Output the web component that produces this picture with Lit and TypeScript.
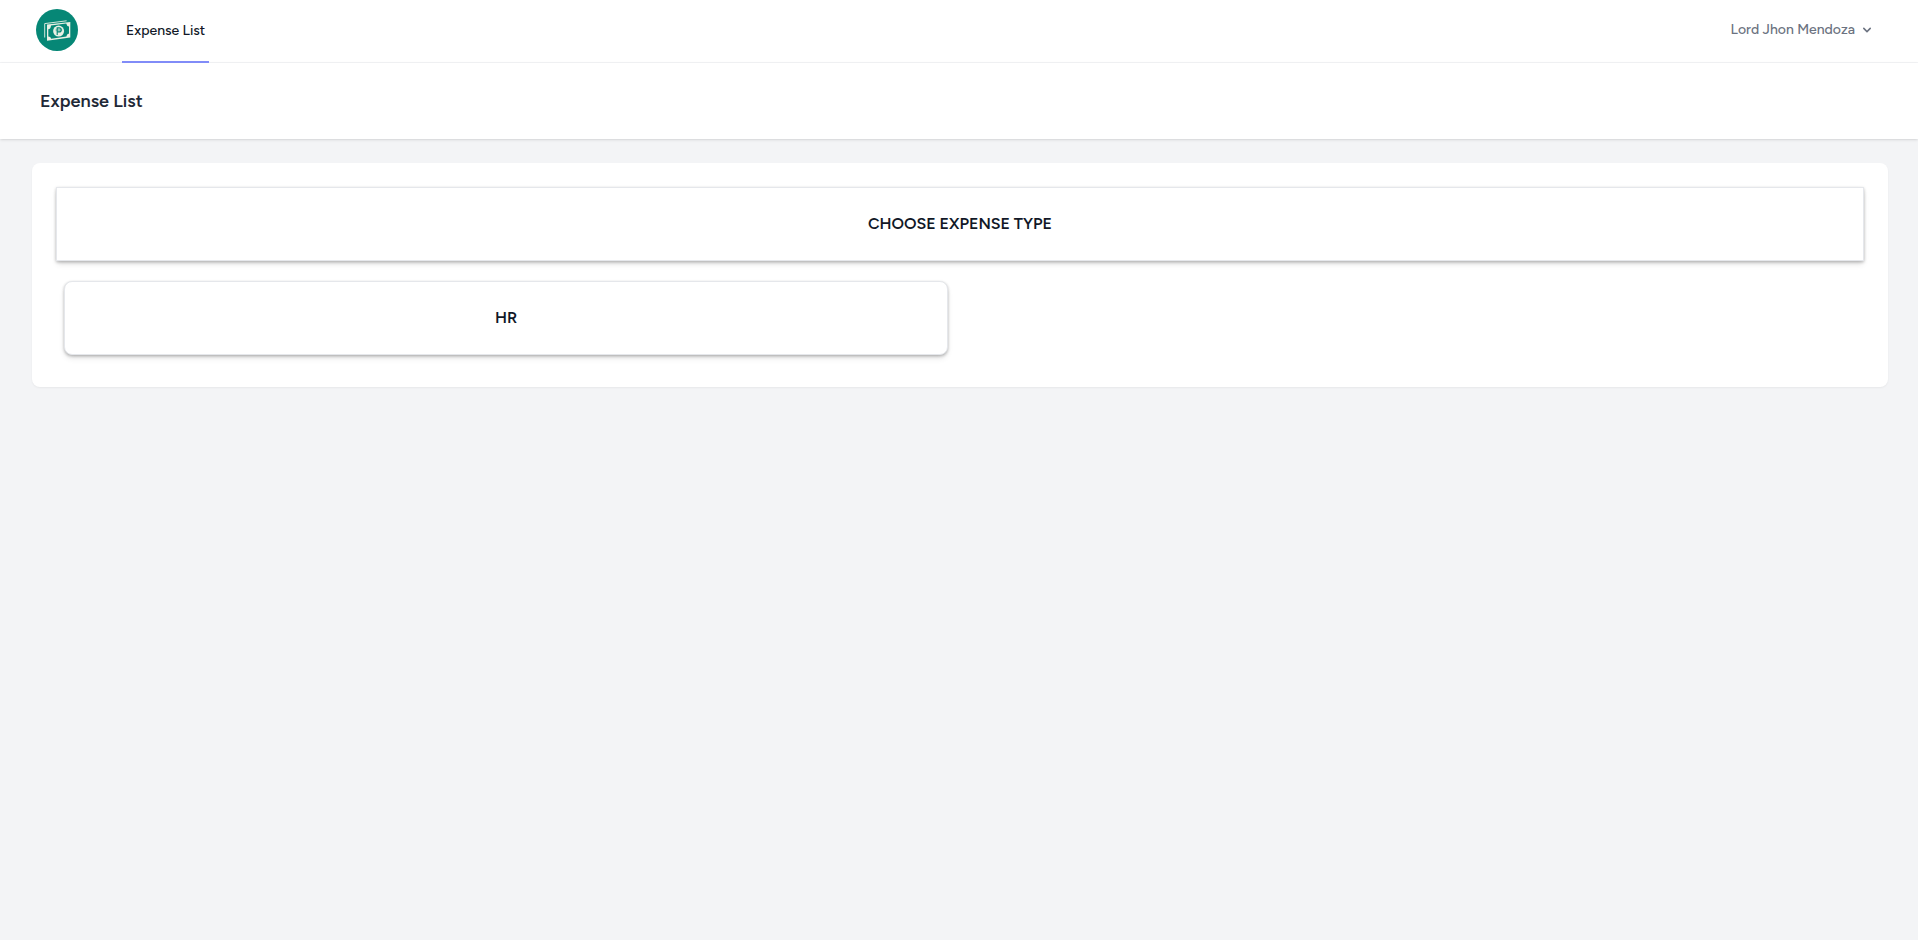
import { LitElement, html, css } from "lit";
import { customElement, property } from "lit/decorators.js";

@customElement("app-logo")
class AppLogo extends LitElement {
  static styles = css`
    :host { display: block; }
    .logo { display: block; width: 42px; height: 42px; }
  `;
  render() {
    return html`<svg class="logo" viewBox="0 0 42 42" role="img" aria-label="Expense tracker">
      <circle cx="21" cy="21" r="21" fill="#068776" />
      <path d="M8.7 28.5V14.6L30.6 11.8" fill="none" stroke="#e9f0e4" stroke-width="0.9" />
      <path d="M11 15.6L34.3 12.9V28.4L11 31.8Z" fill="#e9f0e4" />
      <path d="M15 16.4L30.2 14.6Q30.7 17.2 33 17.5V24.5Q30.6 25 30.4 27.6L15.2 29.8Q14.7 27.4 12.3 27.4V20.2Q14.8 19.8 15 16.4Z" fill="#068776" />
      <circle cx="22.6" cy="22.1" r="5.5" fill="#e9f0e4" />
      <path d="M21.2 26V18.9H23.2Q25.2 18.9 25.2 20.9Q25.2 22.9 23.2 22.9H21.2" fill="none" stroke="#068776" stroke-width="1.1" />
      <path d="M19.6 20.3H26.2M19.6 21.7H26.2" fill="none" stroke="#068776" stroke-width="0.5" />
    </svg>`;
  }
}

@customElement("expense-option")
class ExpenseOption extends LitElement {
  @property() label = "";
  static styles = css`
    :host { display: block; }
    .option {
      display: block;
      width: 100%;
      box-sizing: border-box;
      padding: 24px;
      border: 1px solid #e5e7eb;
      border-radius: 8px;
      background: #fff;
      box-shadow: 0 4px 6px -1px rgba(0, 0, 0, 0.1), 0 2px 4px -1px rgba(0, 0, 0, 0.1), 0 1px 3px rgba(0, 0, 0, 0.2);
      font: inherit;
      font-weight: 600;
      line-height: 24px;
      color: #111827;
      text-align: center;
      cursor: pointer;
    }
  `;
  render() {
    return html`<button class="option" type="button">${this.label}</button>`;
  }
}

@customElement("app-root")
class AppRoot extends LitElement {
  static styles = css`
    :host {
      display: block;
      min-height: 100vh;
      background: #f3f4f6;
      color: #111827;
      font-family: Figtree, Inter, "Liberation Sans", sans-serif;
      font-size: 16px;
      line-height: 24px;
    }
    .nav {
      display: flex;
      justify-content: space-between;
      height: 62px;
      padding: 0 43px 0 36px;
      background: #fff;
      border-bottom: 1px solid #f3f4f6;
    }
    .left { display: flex; gap: 44px; }
    .brand { align-self: flex-start; padding-top: 9px; }
    .tab {
      display: flex;
      align-items: center;
      box-sizing: border-box;
      height: 63px;
      padding: 0 4px;
      border-bottom: 2px solid #818cf8;
      font-size: 14px;
      font-weight: 500;
      line-height: 20px;
      color: #111827;
      text-decoration: none;
    }
    .user {
      display: flex;
      align-items: center;
      gap: 4px;
      padding: 0 0 2px;
      border: 0;
      background: none;
      font: inherit;
      font-size: 14px;
      font-weight: 500;
      line-height: 20px;
      color: #6b7280;
      cursor: pointer;
    }
    .chevron { width: 16px; height: 16px; fill: currentColor; }
    .header {
      padding: 24px 40px;
      background: #fff;
      box-shadow: 0 1px 3px rgba(0, 0, 0, 0.1), 0 1px 2px -1px rgba(0, 0, 0, 0.1);
    }
    .title { margin: 0; font-size: 18px; font-weight: 600; line-height: 28px; color: #1f2937; }
    .main { padding: 24px 30px 24px 32px; }
    .card {
      padding: 24px;
      border-radius: 8px;
      background: #fff;
      box-shadow: 0 1px 2px rgba(0, 0, 0, 0.05);
    }
    .heading {
      margin: 0 0 12px;
      padding: 24px;
      border: 1px solid #e5e7eb;
      box-shadow: 0 4px 6px -1px rgba(0, 0, 0, 0.1), 0 2px 4px -1px rgba(0, 0, 0, 0.1), 0 1px 3px rgba(0, 0, 0, 0.2);
      font-size: 16px;
      font-weight: 600;
      line-height: 24px;
      text-align: center;
    }
    .options { display: grid; grid-template-columns: 1fr 1fr; gap: 8px; }
    .cell { margin: 8px; }
  `;

  private types = ["HR"];

  render() {
    return html`
      <nav class="nav">
        <div class="left">
          <a class="brand" href="#"><app-logo></app-logo></a>
          <a class="tab" href="#" aria-current="page">Expense List</a>
        </div>
        <button class="user" type="button" aria-haspopup="menu">
          Lord Jhon Mendoza
          <svg class="chevron" viewBox="0 0 20 20" aria-hidden="true">
            <path fill-rule="evenodd" clip-rule="evenodd" d="M5.293 7.293a1 1 0 011.414 0L10 10.586l3.293-3.293a1 1 0 111.414 1.414l-4 4a1 1 0 01-1.414 0l-4-4a1 1 0 010-1.414z" />
          </svg>
        </button>
      </nav>
      <header class="header"><h1 class="title">Expense List</h1></header>
      <main class="main">
        <section class="card">
          <h2 class="heading">CHOOSE EXPENSE TYPE</h2>
          <div class="options">
            ${this.types.map((t) => html`<expense-option class="cell" .label=${t}></expense-option>`)}
          </div>
        </section>
      </main>
    `;
  }
}
